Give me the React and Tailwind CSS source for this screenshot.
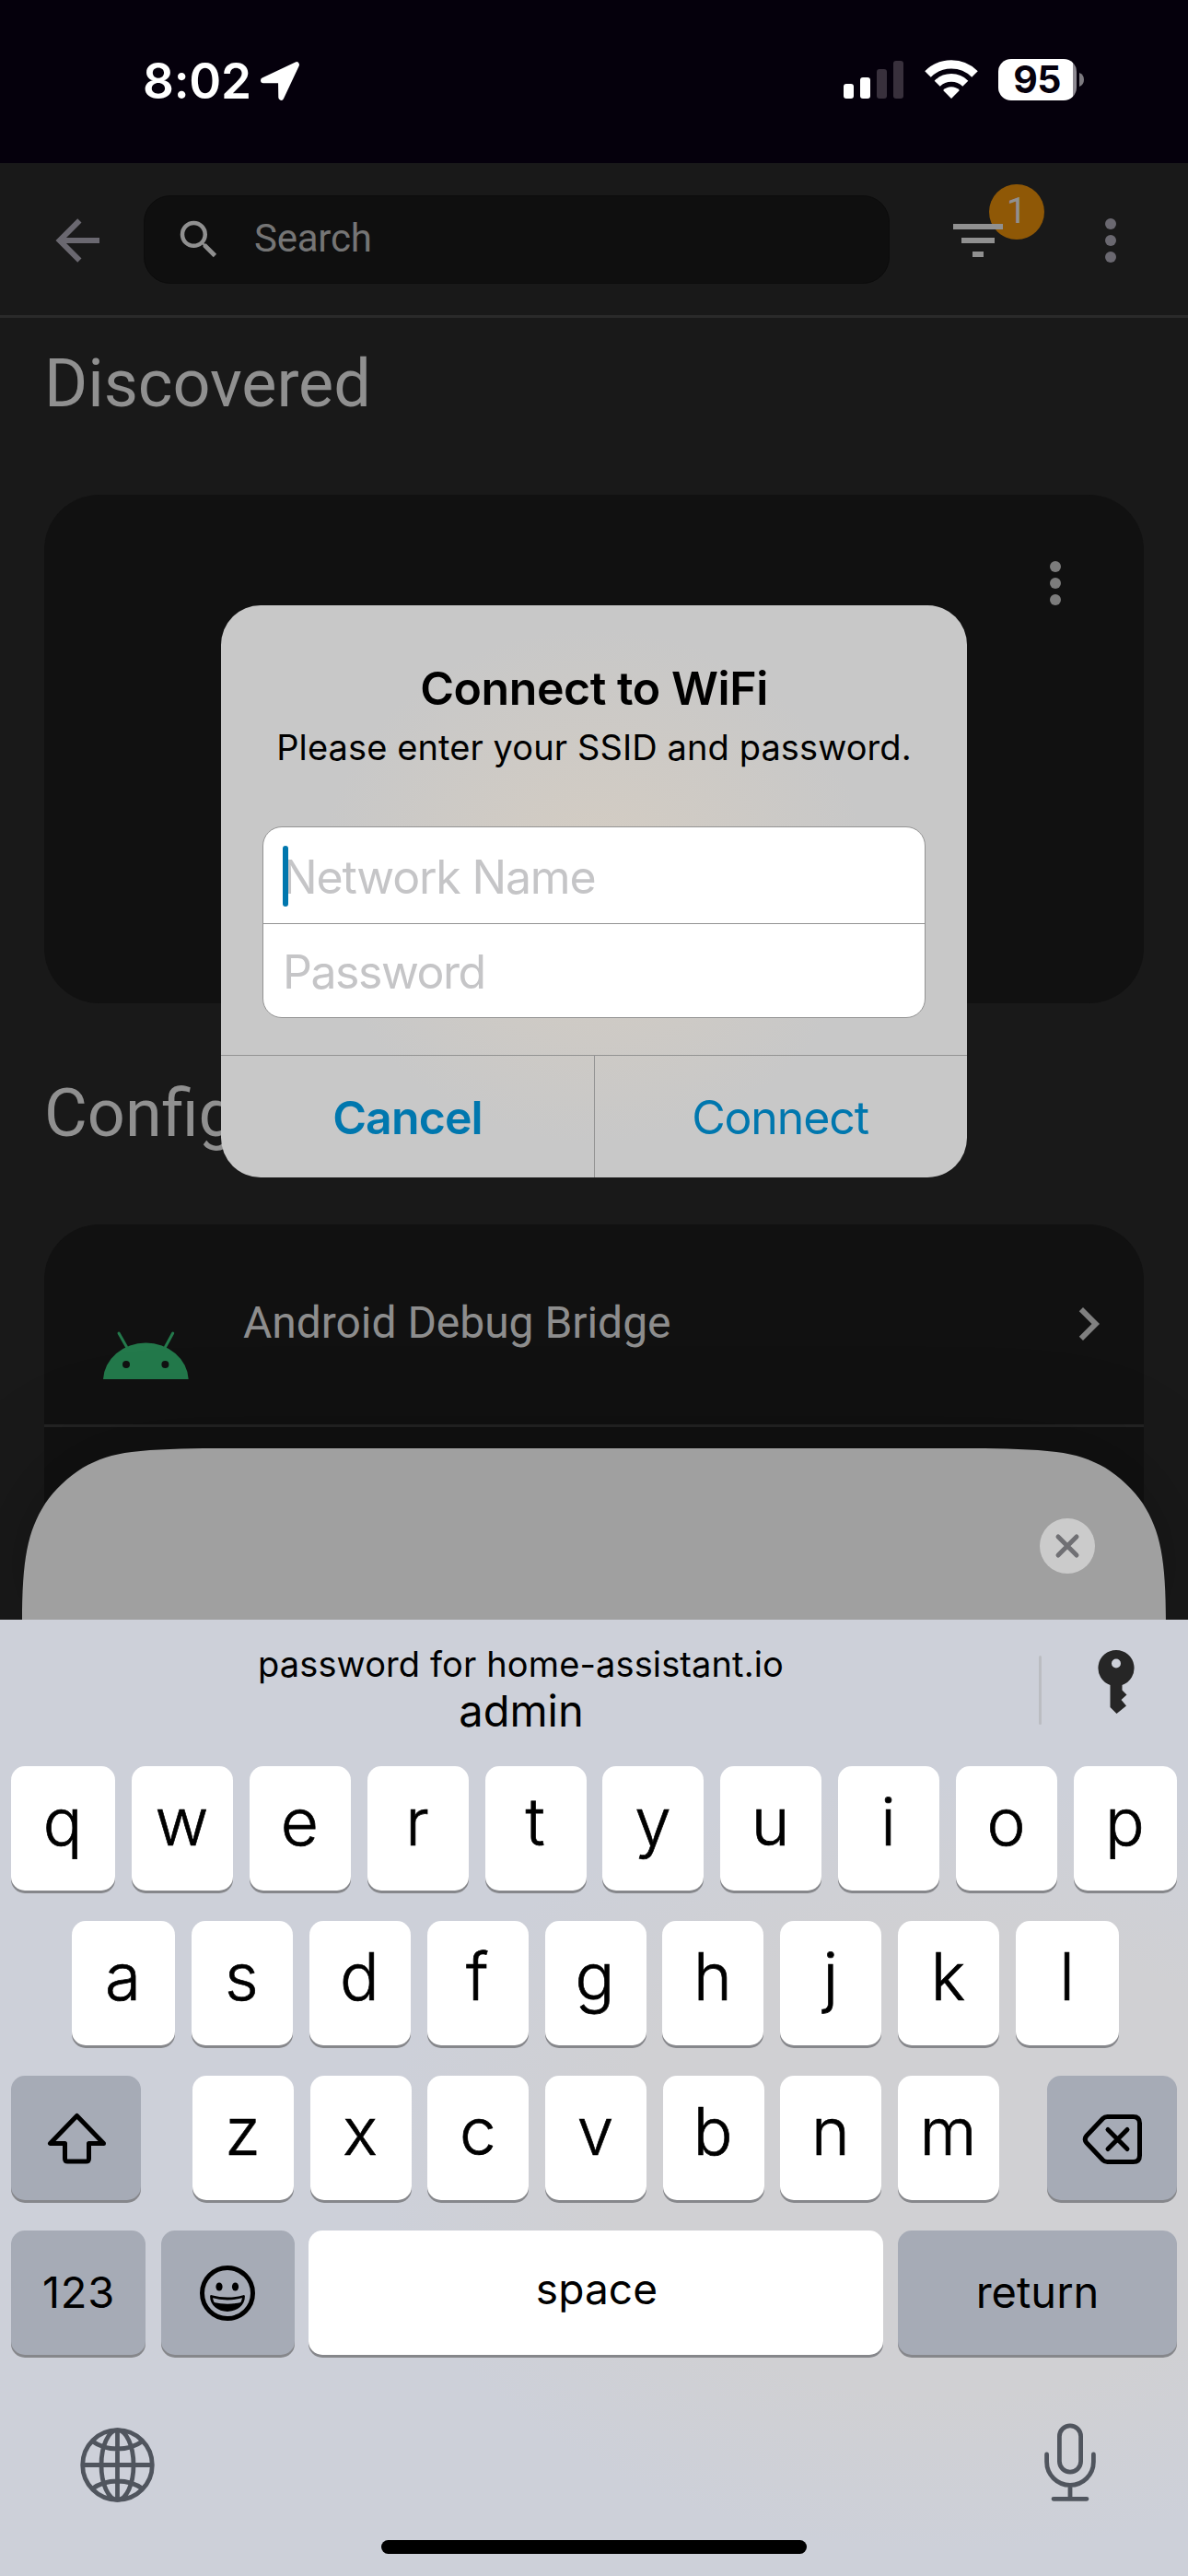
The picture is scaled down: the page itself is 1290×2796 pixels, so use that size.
import React from "react";

const KEY = "flex justify-center rounded-[15px] h-[135px] shadow-[0_3px_0_#86878b] text-black";
const LETTER = "bg-white w-[110px] text-[71px] leading-[121px] font-light [-webkit-text-stroke:0.7px_black] pr-px";
const DARK = "bg-[#a6abb6]";

function Letter({ children, className = "" }) {
  return <div className={`${KEY} ${LETTER} ${className}`}>{children}</div>;
}

function StatusBar() {
  return (
    <div className="h-[177px] bg-[#05000c] flex items-start text-white">
      <span className="ml-[155px] mt-[58px] text-[53px] leading-[60px] font-semibold tracking-[-0.26px]">8:02</span>
      <svg className="ml-[7px] mt-[64px] w-12 h-12" viewBox="280 64 48 48">
        <path d="M286 87.3 322 70.2 305.3 105.8 305 87.3Z" fill="#fff" stroke="#fff" strokeWidth="6" strokeLinejoin="round" />
      </svg>
      <div className="ml-auto mr-[113px] mt-[64px] flex items-start">
        <svg className="w-[65px] h-[43px]" viewBox="0 0 65 43">
          <rect x="0" y="27" width="11" height="16" rx="3" fill="#fff" />
          <rect x="18" y="20" width="11" height="23" rx="3" fill="#fff" />
          <rect x="36" y="11" width="11" height="32" rx="3" fill="#38303c" />
          <rect x="54" y="2" width="11" height="41" rx="3" fill="#38303c" />
        </svg>
        <svg className="ml-[22px] w-[60px] h-[43px]" viewBox="1002.5 64 60 43">
          <g fill="none" stroke="#fff">
            <path d="M1007 80.5A36 36 0 0 1 1058 80.5" strokeWidth="9.2" />
            <path d="M1017.2 90.7A21.7 21.7 0 0 1 1047.8 90.7" strokeWidth="8.6" />
          </g>
          <path d="M1032.5 107 1023.6 98A12.6 12.6 0 0 1 1041.4 98Z" fill="#fff" />
        </svg>
        <div className="ml-[21px] w-[85px] h-[45px] rounded-[14px] bg-[linear-gradient(90deg,#fff_81px,#8e8a92_81px)] text-[#05000c] text-[41px] leading-[45px] font-bold text-center tracking-[-0.6px] pr-px">95</div>
        <svg className="ml-[3px] mt-[15px] w-[5px] h-[15px]" viewBox="0 0 5 15">
          <path d="M0 0C3.5 1.5 5 4 5 7.500S3.500 13.500 0 15Z" fill="#7d7a80" />
        </svg>
      </div>
    </div>
  );
}

function Dots({ color }) {
  return (
    <svg className="w-3 h-12" viewBox="0 0 12 48" fill={color}>
      <circle cx="6" cy="6" r="6" />
      <circle cx="6" cy="24" r="6" />
      <circle cx="6" cy="42" r="6" />
    </svg>
  );
}

function Toolbar() {
  return (
    <div className="h-[168px] border-b-[3px] border-[#2a2a2a] flex items-start">
      <svg className="ml-12 mt-12 w-[72px] h-[72px]" viewBox="0 0 24 24" fill="#6a6870">
        <path d="M20,11V13H8L13.5,18.5L12.08,19.92L4.16,12L12.08,4.08L13.5,5.5L8,11H20Z" />
      </svg>
      <div className="ml-9 mt-[35px] w-[810px] h-24 rounded-[29px] bg-[#0f0f0f] border border-[#0c0c0c] flex items-center">
        <svg className="ml-8 w-[54px] h-[54px]" viewBox="0 0 24 24" fill="#909090">
          <path d="M9.5,3A6.5,6.5 0 0,1 16,9.5C16,11.11 15.41,12.59 14.44,13.73L14.71,14H15.5L20.5,19L19,20.5L14,15.5V14.71L13.73,14.44C12.59,15.41 11.11,16 9.5,16A6.5,6.5 0 0,1 3,9.5A6.5,6.5 0 0,1 9.5,3M9.5,5C7,5 5,7 5,9.5C5,12 7,14 9.5,14C12,14 14,12 14,9.5C14,7 12,5 9.5,5Z" />
        </svg>
        <span className="ml-[33px] pb-[3px] font-[Roboto] text-[42px] leading-[50px] tracking-[-0.25px] text-[#757575]">Search</span>
      </div>
      <div className="relative ml-[69px] mt-[66px] w-[54px] h-9">
        <div className="absolute left-[39px] -top-[43px] w-[60px] h-[60px] rounded-full bg-[#8f5806] font-[Roboto] text-[39px] leading-[58px] text-center text-[#909090]">1</div>
        <div className="relative flex flex-col items-center gap-[9px]">
          <div className="w-[54px] h-[6px] bg-[#909090]" />
          <div className="w-9 h-[6px] bg-[#909090]" />
          <div className="w-3 h-[6px] bg-[#909090]" />
        </div>
      </div>
      <div className="ml-[111px] mt-[60px]"><Dots color="#6a6870" /></div>
    </div>
  );
}

function Dialog() {
  return (
    <div className="absolute left-[240px] top-[657px] w-[810px] h-[621px] rounded-[43px] overflow-hidden bg-[radial-gradient(ellipse_300px_280px_at_50%_49%,#d5cdc2,#c8c8c8)] text-black">
      <div className="pt-[60px] text-center text-[50px] leading-[60px] font-semibold tracking-[-0.44px]">Connect to WiFi</div>
      <div className="mt-[10px] text-center text-[38px] leading-[48px] tracking-[0.1px]">Please enter your SSID and password.</div>
      <div className="mt-[62px] ml-[45px] w-[720px] h-[208px] rounded-[21px] border border-[#939393] bg-white text-[50px] text-[#c5c5c7]">
        <div className="relative h-[105px] border-b border-[#939393] pl-[21px] pt-[2px] leading-[104px] tracking-[-1.19px]">
          Network Name
          <div className="absolute left-[21px] top-[20px] w-[6px] h-[66px] rounded-full bg-[#0077ae]" />
        </div>
        <div className="pl-[21px] leading-[105px] tracking-[-1.47px]">Password</div>
      </div>
      <div className="mt-[40px] h-[133px] border-t border-[#939393] flex text-center text-[50px] leading-[135px] text-[#0077ae]">
        <div className="w-[406px] border-r border-[#939393] font-semibold tracking-[-0.87px]">Cancel</div>
        <div className="flex-1 tracking-[-1.13px] pr-[2px]">Connect</div>
      </div>
    </div>
  );
}

function Sheet() {
  return (
    <div className="absolute left-0 top-[1572px] w-[1290px] [filter:drop-shadow(0_0_50px_rgba(0,0,0,0.25))]">
      <div className="ml-6 w-[1242px] h-[190px] bg-[#a0a0a0] flex justify-end [clip-path:path('M0,190C0,120_6,90_25,60C35,45_50,31_66,21C82,12_98,6.5_119,4C144,1_175,0_210,0H1032C1067,0_1098,1_1123,4C1144,6.5_1160,12_1176,21C1192,31_1207,45_1217,60C1236,90_1242,120_1242,190Z')]">
        <svg className="mt-[76px] mr-[77px] w-[60px] h-[60px]" viewBox="0 0 60 60">
          <circle cx="30" cy="30" r="30" fill="#cbcbcb" />
          <path d="M20 20 40 40M40 20 20 40" stroke="#707074" strokeWidth="5" strokeLinecap="round" />
        </svg>
      </div>
    </div>
  );
}

function Keyboard() {
  return (
    <div className="absolute left-0 top-[1758px] w-[1290px] h-[1038px] bg-[radial-gradient(ellipse_620px_420px_at_80%_57%,#d0d0d3_60%,#cdd0d9)]">
      <div className="h-[159px] flex">
        <div className="w-[1131px] pt-[23px] text-center text-black">
          <div className="text-[38px] leading-[50px] tracking-[0.12px]">password for home-assistant.io</div>
          <div className="text-[47px] leading-[51px] pl-px">admin</div>
        </div>
        <div className="-ml-[3px] mt-[39px] w-[3px] h-[75px] rounded-full bg-[#bbbdc2]" />
        <svg className="ml-[60px] mt-[32px] w-[42px] h-[70px]" viewBox="1191 1790 42 70">
          <path fillRule="evenodd" fill="#262626" d="M1212 1791a19.500 19.500 0 0 1 6.500 37.900V1834.500L1223.500 1839.500 1217.500 1845 1223 1851.500 1212.500 1860 1205.500 1853V1828.900A19.500 19.500 0 0 1 1212 1791ZM1212 1800.500a5 5 0 1 0 0 10 5 5 0 0 0 0-10Z" />
        </svg>
      </div>

      <div className="px-3 flex justify-between">
        <Letter className="w-[113px] pr-1">q</Letter>
        {["w", "e", "r", "t", "y", "u", "i", "o"].map((k) => <Letter key={k}>{k}</Letter>)}
        <Letter className="w-[112px]">p</Letter>
      </div>
      <div className="mt-[33px] pl-[78px] pr-[75px] flex justify-between">
        <Letter className="w-[112px]">a</Letter>
        {["s", "d", "f", "g", "h", "j", "k"].map((k) => <Letter key={k}>{k}</Letter>)}
        <Letter className="w-[112px]">l</Letter>
      </div>
      <div className="mt-[33px] px-3 flex">
        <div className={`${KEY} ${DARK} w-[141px] items-center`}>
          <svg className="ml-[2px] w-[65px] h-[57px]" viewBox="51 2292 65 57" fill="none" stroke="#000" strokeWidth="5" strokeLinejoin="round">
            <path d="M83.500 2296.500 54.500 2326.500H70.500V2343Q70.500 2346 73.500 2346H93.500Q96.500 2346 96.500 2343V2326.500H112.500Z" />
          </svg>
        </div>
        <div className="ml-14 w-[876px] flex justify-between">
          {["z", "x", "c", "v", "b", "n", "m"].map((k) => <Letter key={k}>{k}</Letter>)}
        </div>
        <div className={`${KEY} ${DARK} ml-[52px] w-[141px] items-center`}>
          <svg className="w-[66px] h-[56px] mt-[2px]" viewBox="1175.500 2294 66 56" fill="none" stroke="#000" strokeWidth="5" strokeLinejoin="round" strokeLinecap="round">
            <path d="M1203 2297.500H1231Q1238 2297.500 1238 2304.500V2339.500Q1238 2346.500 1231 2346.500H1203Q1200 2346.500 1198 2344.500L1180.500 2326Q1177 2322 1180.500 2318L1198 2299.500Q1200 2297.500 1203 2297.500Z" />
            <path d="M1203.500 2311.500 1224.500 2332.500M1224.500 2311.500 1203.500 2332.500" />
          </svg>
        </div>
      </div>
      <div className="mt-[33px] px-3 flex">
        <div className={`${KEY} ${DARK} w-[146px] text-[47px] leading-[134px] tracking-[0.8px] pl-px`}>123</div>
        <div className={`${KEY} ${DARK} ml-[17px] w-[145px] items-center pr-px`}>
          <svg className="w-[62px] h-[62px]" viewBox="-31 -31 62 62">
            <circle r="27.500" fill="none" stroke="#000" strokeWidth="5" />
            <ellipse cx="-9" cy="-7" rx="3.600" ry="4.600" />
            <ellipse cx="8.500" cy="-7" rx="3.600" ry="4.600" />
            <path d="M-17.500 3.500Q0 8.500 17.500 3.500C17.500 12 10 18.500 0 18.500S-17.500 12-17.500 3.500Z" fill="none" stroke="#000" strokeWidth="2.800" strokeLinejoin="round" />
            <path d="M-15 10Q0 13.500 15 10C12 16 7 19 0 19S-12 16-15 10Z" />
          </svg>
        </div>
        <div className={`${KEY} bg-white ml-[15px] w-[624px] text-[46px] leading-[127px] tracking-[0.1px] pl-[2px]`}>space</div>
        <div className={`${KEY} ${DARK} ml-4 w-[303px] text-[47px] leading-[134px]`}>return</div>
      </div>

      <div className="mt-[73px] flex justify-between pl-[86px] pr-[98px]">
        <svg className="mt-[5px] w-[83px] h-[83px]" viewBox="-41.500 -41.500 83 83" fill="none" stroke="#50555e" strokeWidth="4.800">
          <circle r="37.800" />
          <ellipse rx="17.500" ry="37.800" />
          <path d="M0-38V38M-38 0H38M-27.500-26Q-16-17.500 0-17.500T27.500-26M-27.500 26Q-16 17.500 0 17.500T27.500 26" />
        </svg>
        <svg className="w-[60px] h-[88px]" viewBox="1132 2629 60 88" fill="none" stroke="#50555e" strokeWidth="4.800" strokeLinecap="round">
          <rect x="1150.400" y="2632.800" width="23.200" height="50.400" rx="11.600" />
          <path d="M1136.600 2664V2672A25.400 25.400 0 0 0 1187.400 2672V2664M1162 2698V2711M1144 2712.300H1180" />
        </svg>
      </div>
      <div className="mx-auto mt-[40px] w-[462px] h-[15px] rounded-full bg-black" />
    </div>
  );
}

export default function App() {
  return (
    <div className="relative w-[1290px] h-[2796px] overflow-hidden bg-[#191919] font-[Inter,sans-serif]">
      <StatusBar />
      <Toolbar />
      <h2 className="ml-12 mt-[24px] font-[Roboto] text-[72px] leading-[96px] tracking-[-0.05px] text-[#909090]">Discovered</h2>
      <div className="mx-12 mt-[72px] h-[552px] rounded-[60px] bg-[#111] flex justify-end">
        <div className="mt-[72px] mr-[90px]"><Dots color="#7c7c7c" /></div>
      </div>
      <h2 className="ml-12 mt-[72px] font-[Roboto] text-[72px] leading-[96px] text-[#909090]">Config</h2>
      <div className="mx-12 mt-[72px] h-[500px] rounded-t-[60px] bg-[#111]">
        <div className="h-[220px] border-b-[3px] border-[#232323] flex">
          <svg className="ml-[64px] mt-[115px] w-[93px] h-[53px]" viewBox="112 1444 93 53">
            <path d="M112 1497A46.400 41.500 0 0 1 204.700 1497Z" fill="#23794b" />
            <path d="M129 1447 137.500 1462M187.700 1447 179.500 1462" stroke="#23794b" strokeWidth="3" strokeLinecap="round" />
            <circle cx="137" cy="1481" r="4" fill="#111" />
            <circle cx="179.400" cy="1481" r="4" fill="#111" />
          </svg>
          <span className="ml-[59px] mt-[77px] font-[Roboto] text-[48px] leading-[60px] tracking-[-0.04px] text-[#8d8d8d]">Android Debug Bridge</span>
          <svg className="ml-auto mr-6 mt-[72px] w-[72px] h-[72px]" viewBox="0 0 24 24" fill="#808080">
            <path d="M8.59,16.58L13.17,12L8.59,7.41L10,6L16,12L10,18L8.59,16.58Z" />
          </svg>
        </div>
      </div>
      <Sheet />
      <Dialog />
      <Keyboard />
    </div>
  );
}
